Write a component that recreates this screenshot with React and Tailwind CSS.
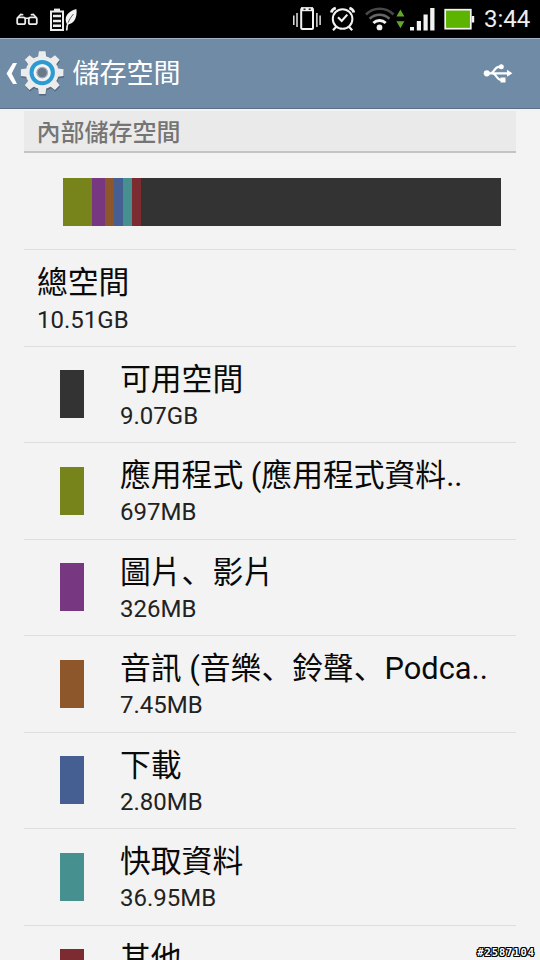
const items = [
    { label: '可用空間', size: '9.07GB', color: 'bg-[#333333]' },
    { label: '應用程式 (應用程式資料..', size: '697MB', color: 'bg-[#77831b]' },
    { label: '圖片、影片', size: '326MB', color: 'bg-[#773781]' },
    { label: '音訊 (音樂、鈴聲、Podca..', size: '7.45MB', color: 'bg-[#8d562b]' },
    { label: '下載', size: '2.80MB', color: 'bg-[#455f92]' },
    { label: '快取資料', size: '36.95MB', color: 'bg-[#46918f]' },
    { label: '其他', size: '', color: 'bg-[#7c2c31]' },
];

const teeth = [0, 45, 90, 135, 180, 225, 270, 315];

function NotificationIcons() {
    return (
        <svg className="w-[80px] h-[38px]" viewBox="0 0 80 38" fill="none" stroke="#ececec">
            <rect x="17.2" y="17.3" width="8" height="6.9" rx="1.8" strokeWidth="1.8" />
            <rect x="28.8" y="17.3" width="8" height="6.9" rx="1.8" strokeWidth="1.8" />
            <path d="M25 18.3h4M17.300 18l3.400-3.600 2.600.4M36.700 18l-3.400-3.600-2.600.4" strokeWidth="1.6" />
            <path d="M51 11.500h12v18.500h-12z" strokeWidth="2" />
            <path d="M54 9.800h6" strokeWidth="2.400" />
            <path d="M53 16h8M53 20.900h8M53 25.800h8" strokeWidth="2.500" />
            <path d="M76.500 9c-7 2-11 5.500-10.800 11 .1 1.900.8 3.500 1.700 4.600 6-.8 10-5.600 9.100-15.600z" fill="#f4f4f4" stroke="none" />
            <path d="M73.500 14c-2.500 3-4.300 5.500-5.400 9" stroke="#333" strokeWidth="0.8" />
            <path d="M68.300 22.500c-1.200 2.500-1.600 4.500-1.600 8" strokeWidth="1.700" />
        </svg>
    );
}

function StatusIcons() {
    return (
        <svg className="w-[188px] h-[38px]" viewBox="290 0 188 38" fill="none" stroke="#f2f2f2">
            {/* vibrate */}
            <rect x="301.200" y="8.500" width="11.800" height="20.500" rx="1" strokeWidth="2" />
            <path d="M301 9.200h12" strokeWidth="4" />
            <path d="M303.500 9.300h2M308.700 9.300h2" stroke="#222" strokeWidth="1.500" />
            <path d="M293.800 15.500v9.500M297 13v14M316.900 13v14M320.100 15.500v9.500" strokeWidth="1.400" />
            {/* alarm */}
            <circle cx="342.600" cy="19" r="9.800" strokeWidth="2" />
            <path d="M338 17.300l3.700 3.700 5.600-6.400" strokeWidth="2.200" />
            <path d="M331.300 12.500c.6-2.300 2-3.700 4.500-4.500M353.900 12.500c-.6-2.300-2-3.700-4.500-4.500" strokeWidth="2.800" />
            <path d="M336.500 26.500l-3.500 3.800M348.700 26.500l3.500 3.800" strokeWidth="2.200" />
            {/* wifi */}
            <path d="M366 14.500c7.500-7.600 20-7.600 27.500 0" stroke="#484848" strokeWidth="2.600" />
            <path d="M369.700 18.800c5.500-5.300 14.200-5.300 19.700 0" stroke="#666" strokeWidth="2.600" />
            <path d="M373.400 23c3.500-3.400 8.800-3.400 12.300 0" strokeWidth="2.900" />
            <circle cx="379.500" cy="27.400" r="2.900" fill="#f2f2f2" stroke="none" />
            <path d="M400.400 9.500l4 7h-8zM400.400 28.200l4-7h-8z" fill="#62a62b" stroke="none" />
            {/* signal */}
            <path d="M410 27h4v3.500h-4zM416.800 21h4.200v9.500h-4.200zM423.500 14.500h4.200v16h-4.200zM430.200 8h4.300v22.500h-4.300z" fill="#f2f2f2" stroke="none" />
            {/* battery */}
            <rect x="445.200" y="9.700" width="25.600" height="19" fill="#5cb400" stroke="#f4f4f4" strokeWidth="1.700" />
            <path d="M471.600 16h2.600v6.500h-2.600z" fill="#f2f2f2" stroke="none" />
        </svg>
    );
}

function Gear() {
    return (
        <svg className="w-[46px] h-[46px]" viewBox="-24.2 -21.6 46 46">
            <g fill="#3f5368" opacity="0.6" transform="translate(0.500 1.500)">
                <circle r="16.500" />
                {teeth.map((a) => (
                    <path key={a} d="M-4.300-14l1-7.300h6.600l1 7.300z" transform={`rotate(${a})`} />
                ))}
            </g>
            <g fill="#ececec">
                <circle r="16.500" />
                {teeth.map((a) => (
                    <path key={a} d="M-4.300-14l1-7.300h6.600l1 7.300z" transform={`rotate(${a})`} />
                ))}
            </g>
            <circle r="10.700" fill="#f1f3f4" stroke="#2c9bd2" strokeWidth="4" />
            <circle r="5.300" fill="#67798b" stroke="#a9adb0" strokeWidth="1.300" />
        </svg>
    );
}

function UsbIcon() {
    return (
        <svg className="w-[30px] h-[22px]" viewBox="483 63 30 22" fill="none" stroke="#fff" strokeWidth="2.2">
            <path d="M487 73.300h21M490.500 73.300c4 0 3.500-6.500 8.500-6.500h2M492.500 73.300c4 0 3.500 6.700 9 6.700" />
            <circle cx="486.800" cy="73.300" r="3.100" fill="#fff" stroke="none" />
            <circle cx="501.300" cy="66.800" r="2.500" fill="#fff" stroke="none" />
            <path d="M500.500 77.500h5v5h-5zM507 69.800l5.400 3.500-5.400 3.500z" fill="#fff" stroke="none" />
        </svg>
    );
}

// the enumeration comma sits at the lower left of its box
function Label({ text }) {
    return text.split(/(、)/).map((part, i) =>
        part === '、' ? <span key={i} lang="zh-CN" className="leading-none font-['Noto_Sans_CJK_SC',sans-serif]">、</span> : part
    );
}

function Row({ item }) {
    return (
        <div className="flex h-[96.5px] shrink-0 border-t border-[#dedede] pl-9">
            <div className={`mt-[23.9px] h-12 w-6 shrink-0 ${item.color}`} />
            <div className="ml-9 pt-[13.4px] whitespace-nowrap">
                <div className="h-10 text-[30.8px] leading-10 text-[#0a0a0a]"><Label text={item.label} /></div>
                <div className="h-8 text-[24px] leading-8 text-[#222]">{item.size}</div>
            </div>
        </div>
    );
}

export default function App() {
    return (
        <div className="relative flex h-[960px] w-[540px] flex-col overflow-hidden bg-[#f3f3f3] font-[Roboto,'Noto_Sans_CJK_TC',sans-serif]">
            <div className="flex h-[38px] shrink-0 items-center bg-black">
                <NotificationIcons />
                <div className="w-[210px]" />
                <StatusIcons />
                <span className="ml-1.5 text-[24px] leading-none text-[#eee]">3:44</span>
            </div>
            <header className="flex h-[71px] shrink-0 items-center border-t border-[#9fb2c4] border-b border-b-[#5c7085] bg-[#708ba5]">
                <svg className="ml-1.5 h-6 w-3" viewBox="0 0.6 12 24" fill="#fff">
                    <path d="M7 1.500h4l-5.300 10.500 5.300 10.500h-4l-6.500-10.500z" />
                </svg>
                <Gear />
                <h1 className="ml-[8.5px] pt-[2px] text-[27px] leading-none text-white">儲存空間</h1>
                <div className="ml-auto mr-[27px]">
                    <UsbIcon />
                </div>
            </header>
            <main className="flex flex-col px-6 pt-0.5">
                <h2 className="h-[42px] shrink-0 border-b-2 border-[#c4c4c4] bg-[#eaeaea] pl-[12.5px] text-[24px] leading-[44px] font-medium text-[#757575]">內部儲存空間</h2>
                <div className="flex h-24 shrink-0 pt-[24.6px] pr-[15px] pl-[39px]">
                    <div className="flex h-12 w-full bg-[#333333]">
                        <div className="w-[28.5px] bg-[#77831b]" />
                        <div className="w-[13px] bg-[#773781]" />
                        <div className="w-[9px] bg-[#8d562b]" />
                        <div className="w-[9px] bg-[#455f92]" />
                        <div className="w-[9px] bg-[#46918f]" />
                        <div className="w-[9px] bg-[#7c2c31]" />
                    </div>
                </div>
                <div className="h-[96.6px] shrink-0 border-t border-[#dedede] pt-[13px] pl-[13px]">
                    <div className="h-10 text-[30.8px] leading-10 text-[#0a0a0a]">總空間</div>
                    <div className="h-8 pt-px text-[24px] leading-8 text-[#222]">10.51GB</div>
                </div>
                {items.map((item) => (
                    <Row key={item.label} item={item} />
                ))}
            </main>
            <span className="absolute right-[5px] bottom-0 font-['DejaVu_Sans_Mono',monospace] text-[10.5px] leading-[15px] tracking-[0.9px] font-bold text-white [text-shadow:1px_0_#000,-1px_0_#000,0_1px_#000,0_-1px_#000,1px_1px_#000,-1px_-1px_#000,1px_-1px_#000,-1px_1px_#000]">#2587104</span>
        </div>
    );
}
